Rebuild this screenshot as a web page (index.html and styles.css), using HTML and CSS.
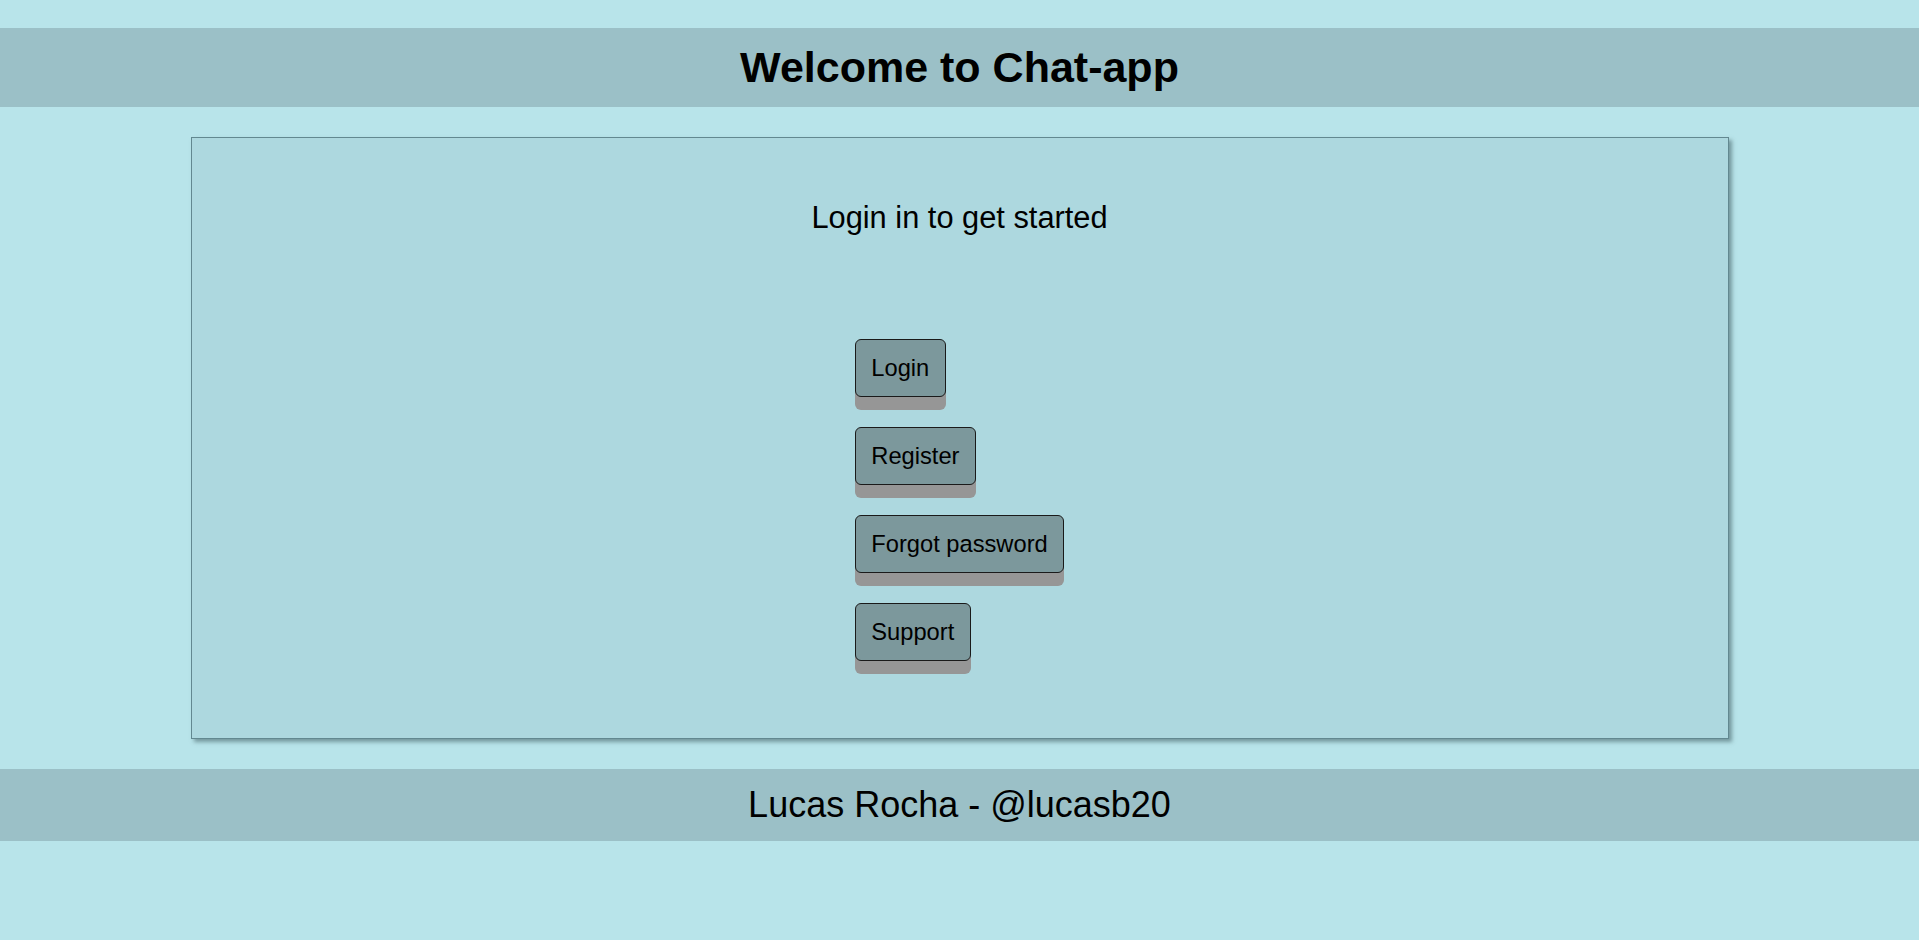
FILE: index.html
```html
<!DOCTYPE html>
<html lang="en">
<head>
<meta charset="utf-8">
<title>Chat-app</title>
<link rel="stylesheet" href="styles.css">
</head>
<body>
<header class="site-header">
  <h1 class="site-title">Welcome to Chat-app</h1>
</header>
<main class="panel">
  <h2 class="panel-title">Login in to get started</h2>
  <div class="actions">
    <button class="action-btn" type="button">Login</button>
    <button class="action-btn" type="button">Register</button>
    <button class="action-btn" type="button">Forgot password</button>
    <button class="action-btn" type="button">Support</button>
  </div>
</main>
<footer class="site-footer">
  <p class="credit">Lucas Rocha - @lucasb20</p>
</footer>
</body>
</html>
```

FILE: styles.css
```css
html, body {
  margin: 0;
  padding: 0;
}
body {
  background: #b8e4ea;
  font-family: "Liberation Sans", Arial, sans-serif;
  color: #000;
  padding-top: 28px;
  min-height: 940px;
  box-sizing: border-box;
}
.site-header {
  background: #9bc0c7;
  padding: 14px 0 15px;
  text-align: center;
}
.site-title {
  margin: 0;
  font-size: 43px;
  line-height: 50px;
  font-weight: bold;
}
.panel {
  display: block;
  box-sizing: border-box;
  width: 1538px;
  margin: 30px auto;
  background: #add8df;
  border: 1px solid #628890;
  box-shadow: 3px 3px 4px rgba(60, 90, 95, 0.55);
  padding: 62px 0 77px;
  text-align: center;
}
.panel-title {
  margin: 0;
  font-size: 30.8px;
  line-height: 36px;
  font-weight: normal;
}
.actions {
  display: inline-flex;
  flex-direction: column;
  align-items: flex-start;
  gap: 30px;
  margin-top: 103px;
  vertical-align: top;
}
.action-btn {
  font-family: "Liberation Sans", Arial, sans-serif;
  font-size: 23.7px;
  line-height: 27px;
  color: #000;
  background: #7c989c;
  border: 1px solid #1a1a1a;
  border-radius: 6px;
  padding: 14.5px 15.5px;
  box-shadow: 0 13px 0 #969696;
  cursor: pointer;
}
.site-footer {
  background: #9bc0c7;
  padding: 15px 0 16px;
  text-align: center;
}
.credit {
  margin: 0;
  font-size: 36px;
  line-height: 41px;
}
```
